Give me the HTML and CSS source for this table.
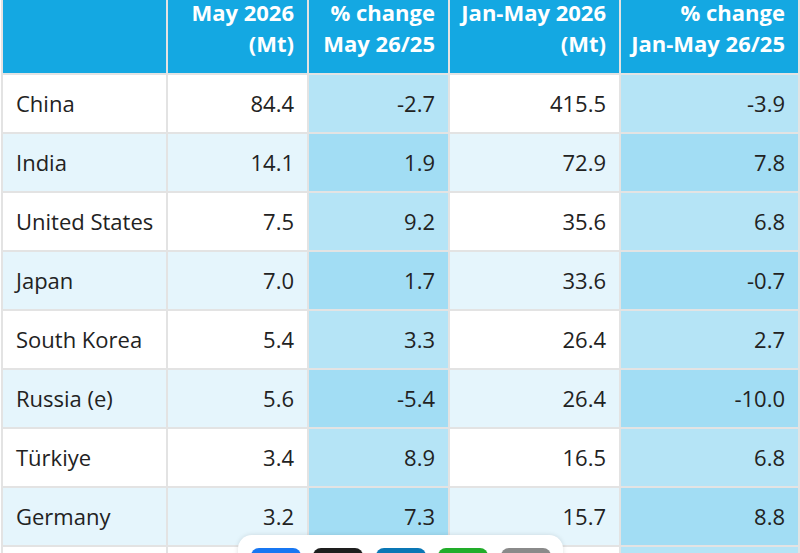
FILE: index.html
```html
<!DOCTYPE html>
<html lang="en">
<head>
<meta charset="utf-8">
<title>Crude steel production</title>
<link rel="stylesheet" href="styles.css">
</head>
<body>
<div class="table">
  <div class="row head">
    <div class="cell"></div>
    <div class="cell num">May 2026<br>(Mt)</div>
    <div class="cell num">% change<br>May 26/25</div>
    <div class="cell num">Jan-May 2026<br>(Mt)</div>
    <div class="cell num">% change<br>Jan-May 26/25</div>
  </div>
  <div class="row">
    <div class="cell">China</div><div class="cell num">84.4</div><div class="cell num hl">-2.7</div><div class="cell num">415.5</div><div class="cell num hl">-3.9</div>
  </div>
  <div class="row alt">
    <div class="cell">India</div><div class="cell num">14.1</div><div class="cell num hl">1.9</div><div class="cell num">72.9</div><div class="cell num hl">7.8</div>
  </div>
  <div class="row">
    <div class="cell">United States</div><div class="cell num">7.5</div><div class="cell num hl">9.2</div><div class="cell num">35.6</div><div class="cell num hl">6.8</div>
  </div>
  <div class="row alt">
    <div class="cell">Japan</div><div class="cell num">7.0</div><div class="cell num hl">1.7</div><div class="cell num">33.6</div><div class="cell num hl">-0.7</div>
  </div>
  <div class="row">
    <div class="cell">South Korea</div><div class="cell num">5.4</div><div class="cell num hl">3.3</div><div class="cell num">26.4</div><div class="cell num hl">2.7</div>
  </div>
  <div class="row alt">
    <div class="cell">Russia (e)</div><div class="cell num">5.6</div><div class="cell num hl">-5.4</div><div class="cell num">26.4</div><div class="cell num hl">-10.0</div>
  </div>
  <div class="row">
    <div class="cell">Türkiye</div><div class="cell num">3.4</div><div class="cell num hl">8.9</div><div class="cell num">16.5</div><div class="cell num hl">6.8</div>
  </div>
  <div class="row alt">
    <div class="cell">Germany</div><div class="cell num">3.2</div><div class="cell num hl">7.3</div><div class="cell num">15.7</div><div class="cell num hl">8.8</div>
  </div>
  <div class="row">
    <div class="cell">Brazil</div><div class="cell num">2.8</div><div class="cell num hl">1.0</div><div class="cell num">13.9</div><div class="cell num hl">1.2</div>
  </div>
</div>

<div class="share">
  <a class="btn fb" href="#" aria-label="Facebook"><svg viewBox="0 0 24 24" width="22" height="22"><path fill="#fff" d="M13.5 22v-8h2.7l.4-3.2h-3.1V8.8c0-.9.3-1.5 1.6-1.5h1.6V4.4c-.3 0-1.3-.1-2.4-.1-2.4 0-4 1.4-4 4.1v2.4H7.6V14h2.7v8z"/></svg></a>
  <a class="btn x" href="#" aria-label="X"><svg viewBox="0 0 24 24" width="20" height="20"><path fill="#fff" d="M17.8 3h3.1l-6.8 7.7L22 21h-6.2l-4.9-6.4L5.3 21H2.2l7.2-8.3L1.8 3h6.4l4.4 5.9zm-1.1 16.2h1.7L7.3 4.7H5.5z"/></svg></a>
  <a class="btn li" href="#" aria-label="LinkedIn"><svg viewBox="0 0 24 24" width="20" height="20"><path fill="#fff" d="M4 8.5h3.6V20H4zM5.8 3a2.1 2.1 0 1 1 0 4.2 2.1 2.1 0 0 1 0-4.2zM9.8 8.5h3.4v1.6c.5-.9 1.7-1.9 3.5-1.9 3.7 0 4.3 2.4 4.3 5.5V20h-3.6v-5.6c0-1.3 0-3-1.9-3s-2.1 1.4-2.1 2.9V20H9.8z"/></svg></a>
  <a class="btn wa" href="#" aria-label="WhatsApp"><svg viewBox="0 0 24 24" width="22" height="22"><path fill="none" stroke="#fff" stroke-width="1.8" d="M12 3a9 9 0 0 0-7.8 13.5L3 21l4.6-1.2A9 9 0 1 0 12 3z"/></svg></a>
  <a class="btn em" href="#" aria-label="Email"><svg viewBox="0 0 24 24" width="22" height="22"><path fill="none" stroke="#fff" stroke-width="1.8" d="M3 6h18v12H3zM3 6l9 7 9-7"/></svg></a>
</div>
</body>
</html>
```

FILE: styles.css
```css
html, body {
  margin: 0;
  padding: 0;
  background: #ffffff;
  overflow: hidden;
}

body {
  font-family: "Open Sans", "DejaVu Sans", sans-serif;
  font-size: 22px;
  color: #222222;
}

.table {
  display: flex;
  flex-direction: column;
  gap: 2px;
  width: 795px;
  margin: -6px 0 0 1px;
  padding: 2px;
  background: #e3e3e3;
}

.row {
  display: grid;
  grid-template-columns: 163px 139px 139px 169px 177px;
  gap: 2px;
  height: 57px;
}

.cell {
  display: flex;
  align-items: center;
  padding: 0 13px;
  background: #ffffff;
  line-height: 31px;
  white-space: nowrap;
}

.cell.num {
  justify-content: flex-end;
  text-align: right;
}

.cell.hl {
  background: #b5e4f6;
}

.row.alt .cell {
  background: #e5f5fc;
}

.row.alt .cell.hl {
  background: #a2ddf4;
}

.row.head {
  height: 77px;
}

.row.head .cell {
  background: #14a8e2;
  color: #ffffff;
  font-weight: 700;
  align-items: flex-start;
  padding-top: 1px;
  box-sizing: border-box;
}

.share {
  position: fixed;
  left: 238px;
  top: 535px;
  width: 325px;
  height: 60px;
  box-sizing: border-box;
  padding: 13px 12.5px 0;
  display: flex;
  gap: 12.5px;
  background: #ffffff;
  border-radius: 14px 14px 0 0;
  box-shadow: 0 0 5px rgba(0, 0, 0, 0.12);
}

.btn {
  width: 50px;
  height: 40px;
  border-radius: 8px;
  display: flex;
  align-items: center;
  justify-content: center;
}

.btn.fb { background: #1877f2; }
.btn.x { background: #1e1e1e; }
.btn.li { background: #0a77b5; }
.btn.wa { background: #22ad2a; }
.btn.em { background: #8a8a8a; }
```
